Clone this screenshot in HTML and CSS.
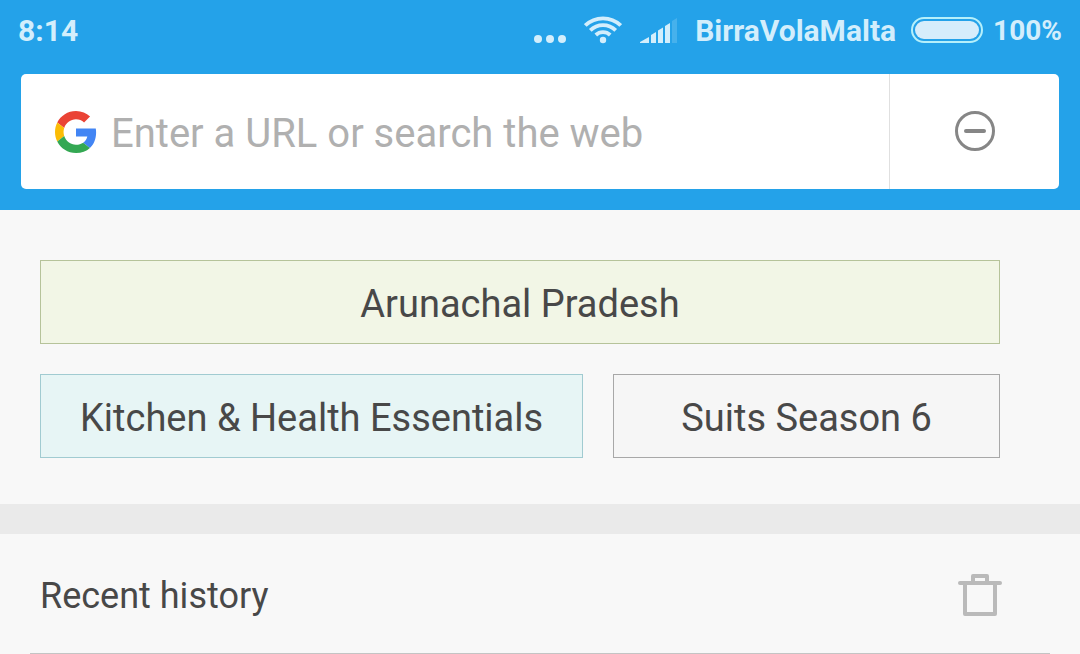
FILE: index.html
```html
<!DOCTYPE html>
<html lang="en">
<head>
    <meta charset="UTF-8">
    <meta name="viewport" content="width=device-width, initial-scale=1.0">
    <title>Search</title>
    <link rel="stylesheet" href="styles.css">
</head>
<body>
    <header class="header">
        <div class="status-bar">
            <span class="clock">8:14</span>
            <div class="status-icons">
                <svg class="dots" width="32" height="30" viewBox="0 0 32 30" fill="currentColor">
                    <circle cx="4" cy="24" r="4"/>
                    <circle cx="16" cy="24" r="4"/>
                    <circle cx="28" cy="24" r="4"/>
                </svg>
                <svg class="wifi" width="38" height="30" viewBox="0 0 38 30" fill="none" stroke="currentColor" stroke-width="3.800">
                    <path d="M1.300 10.500a25.500 25.500 0 0 1 35.400 0"/>
                    <path d="M6.300 15.300a18 18 0 0 1 25.400 0"/>
                    <path d="M11.800 20a10.500 10.500 0 0 1 14.400 0"/>
                    <circle cx="19" cy="25" r="3.200" fill="currentColor" stroke="none"/>
                </svg>
                <svg class="signal" width="37" height="30" viewBox="0 0 37 30" fill="currentColor">
                    <path d="M0 28v-1l9-5v6z"/>
                    <path d="M11 28v-8l5-3v11z"/>
                    <path d="M18 28V15.500l5-3V28z"/>
                    <path d="M25 28V11l5-3v20z"/>
                    <path d="M32 28V6l5-3v25z" opacity=".2"/>
                </svg>
                <span class="carrier">BirraVolaMalta</span>
                <span class="battery"><span class="battery-level"></span></span>
                <span class="battery-text">100%</span>
            </div>
        </div>

        <form class="search-box">
            <svg class="google-logo" width="42" height="42" viewBox="0 0 48 48">
                <path fill="#EA4335" d="M24 9.500c3.540 0 6.710 1.220 9.210 3.600l6.850-6.850C35.900 2.380 30.470 0 24 0 14.620 0 6.510 5.380 2.560 13.220l7.980 6.190C12.430 13.720 17.740 9.500 24 9.500z"/>
                <path fill="#4285F4" d="M46.980 24.550c0-1.570-.15-3.090-.38-4.550H24v9.020h12.940c-.58 2.960-2.260 5.480-4.780 7.180l7.730 6c4.510-4.180 7.090-10.360 7.090-17.650z"/>
                <path fill="#FBBC05" d="M10.530 28.590c-.48-1.450-.76-2.990-.76-4.590s.27-3.140.76-4.590l-7.980-6.190C.92 16.460 0 20.120 0 24c0 3.880.92 7.540 2.560 10.780l7.970-6.190z"/>
                <path fill="#34A853" d="M24 48c6.480 0 11.930-2.130 15.890-5.810l-7.730-6c-2.150 1.450-4.920 2.300-8.160 2.300-6.260 0-11.570-4.220-13.470-9.910l-7.980 6.190C6.510 42.620 14.620 48 24 48z"/>
            </svg>
            <input class="search-input" type="text" placeholder="Enter a URL or search the web" aria-label="Enter a URL or search the web">
            <button class="clear-btn" type="button" aria-label="Clear">
                <svg width="40" height="42" viewBox="0 0 40 42" fill="none" stroke="currentColor">
                    <circle cx="20" cy="20" r="18.500" stroke-width="3"/>
                    <path d="M11 20h18" stroke-width="4" stroke-linecap="round"/>
                </svg>
            </button>
        </form>
    </header>

    <section class="suggestions">
        <button class="chip green">Arunachal Pradesh</button>
        <button class="chip teal">Kitchen &amp; Health Essentials</button>
        <button class="chip gray">Suits Season 6</button>
    </section>

    <section class="history">
        <div class="history-header">
            <h2 class="history-title">Recent history</h2>
            <button class="trash-btn" aria-label="Clear history">
                <svg width="44" height="44" viewBox="0 0 44 44" fill="none" stroke="currentColor" stroke-width="4">
                    <path d="M2 9h40" stroke-linecap="round"/>
                    <path d="M15 9V2h14v7" stroke-linejoin="round"/>
                    <path d="M7 9v31h30V9" stroke-linejoin="round"/>
                </svg>
            </button>
        </div>
    </section>
</body>
</html>
```

FILE: styles.css
```css
* {
    margin: 0;
    padding: 0;
    box-sizing: border-box;
}

body {
    font-family: Roboto, 'Liberation Sans', sans-serif;
    background: #f8f8f8;
    color: #484848;
}

button {
    font-family: inherit;
    color: inherit;
    cursor: pointer;
}

svg {
    display: block;
}

.header {
    background: #24a2e9;
    padding: 0 21px 21px;
}

/* Status bar */
.status-bar {
    display: flex;
    justify-content: space-between;
    align-items: center;
    height: 60px;
    margin: 0 -3px 14px;
    color: #d3eefc;
    font-size: 30px;
    font-weight: 700;
}

.status-icons {
    display: flex;
    align-items: center;
}

.dots,
.wifi,
.signal {
    margin-right: 18px;
}

.battery {
    width: 72px;
    height: 26px;
    margin: 0 10px 0 15px;
    padding: 2px;
    border: 2px solid #b5f0fb;
    border-radius: 13px;
}

.battery-level {
    display: block;
    height: 100%;
    border-radius: 9px;
    background: #d6edfb;
}

.battery-text {
    font-size: 28px;
}

/* Search */
.search-box {
    display: flex;
    align-items: center;
    height: 115px;
    padding-left: 34px;
    background: white;
    border-radius: 5px;
}

.search-input {
    flex: 1;
    min-width: 0;
    height: 100%;
    padding: 4px 14px 0;
    border: none;
    outline: none;
    background: transparent;
    font-family: inherit;
    font-size: 40px;
    color: #484848;
}

.search-input::placeholder {
    color: #b0b0b0;
}

.clear-btn {
    display: flex;
    align-items: center;
    justify-content: center;
    width: 170px;
    height: 100%;
    border: none;
    border-left: 1px solid #e0e0e0;
    background: transparent;
    color: #868686;
}

/* Suggestions */
.suggestions {
    display: flex;
    flex-wrap: wrap;
    gap: 30px;
    padding: 50px 80px 46px 40px;
}

.chip {
    flex: 1;
    height: 84px;
    padding: 4px 39px 0;
    border: 1px solid;
    font-size: 38px;
    white-space: nowrap;
}

.chip.green {
    flex: 1 0 100%;
    background: #f2f6e6;
    border-color: #b6c39a;
}

.chip.teal {
    flex: none;
    background: #e7f5f5;
    border-color: #a1cbd1;
}

.chip.gray {
    background: #f6f6f6;
    border-color: #a8a8a8;
}

/* History */
.history {
    border-top: 30px solid #eaeaea;
    padding: 0 30px;
}

.history-header {
    display: flex;
    justify-content: space-between;
    align-items: center;
    height: 120px;
    padding: 4px 48px 0 10px;
    border-bottom: 1px solid #c4c4c4;
}

.history-title {
    font-size: 36px;
    font-weight: 400;
}

.trash-btn {
    border: none;
    background: transparent;
    color: #bababa;
}
```
